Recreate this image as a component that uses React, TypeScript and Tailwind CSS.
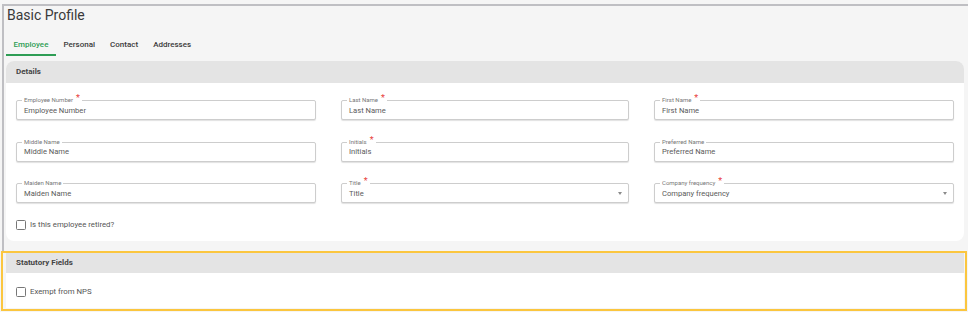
type Field = {
  label: string;
  required?: boolean;
  select?: boolean;
};

const fields: Field[] = [
  { label: 'Employee Number', required: true },
  { label: 'Last Name', required: true },
  { label: 'First Name', required: true },
  { label: 'Middle Name' },
  { label: 'Initials', required: true },
  { label: 'Preferred Name' },
  { label: 'Maiden Name' },
  { label: 'Title', required: true, select: true },
  { label: 'Company frequency', required: true, select: true },
];

const tabs = ['Employee', 'Personal', 'Contact', 'Addresses'];

function FloatingInput({ field }: { field: Field }) {
  return (
    <div className="relative h-[20px] rounded-[2px] border border-[#cdcdcd] bg-white shadow-[0_1px_1px_rgba(0,0,0,0.12)]">
      {/* label sits on the top border */}
      <div className="absolute -top-[5px] left-[5px] flex items-start bg-white px-[2px] text-[6px] leading-[8px] text-[#777]">
        <span>{field.label}</span>
        {field.required && <span className="-mt-[2px] ml-[3px] text-[9px] leading-[9px] text-[#e8413c]">*</span>}
      </div>
      <div className="flex h-full items-center justify-between pl-[7px] pr-[6px] pt-[1px]">
        <span className="text-[7.6px] leading-[10px] text-[#5a5a5a]">{field.label}</span>
        {field.select && <span className="h-0 w-0 border-x-[2.5px] border-t-[3px] border-x-transparent border-t-[#8a8a8a]" />}
      </div>
    </div>
  );
}

function Checkbox({ label }: { label: string }) {
  return (
    <label className="flex h-[10px] items-center gap-[4px]">
      <span className="h-[10px] w-[10px] rounded-[1.5px] border border-[#777] bg-white" />
      <span className="text-[7.8px] leading-[10px] text-[#555]">{label}</span>
    </label>
  );
}

export default function App() {
  return (
    <div className="h-[312px] w-[968px] overflow-hidden bg-[#f5f5f5] font-['Roboto',sans-serif]">
      <div className="pt-[4px]">
        <div className="ml-[2px] border-l-2 border-t-2 border-[#bfbfc3] pb-[10px] pl-[2px] pr-[2px]">
          {/* Page title */}
          <h1 className="pl-[1px] pt-[1px] text-[14px] leading-[16px] text-[#3a3a3a]">Basic Profile</h1>

          {/* Tabs */}
          <div className="mt-[17px] flex">
            {tabs.map((t, i) => (
              <div
                key={t}
                className={`px-[7.5px] pb-[4px] text-[8px] font-medium leading-[10px] ${
                  i === 0 ? 'border-b-2 border-[#2e9d55] text-[#2e9d55]' : 'border-b-2 border-transparent text-[#3a3a3a]'
                }`}
              >
                {t}
              </div>
            ))}
          </div>

          {/* Details card */}
          <div className="mt-[5px] w-[958px] rounded-[8px] bg-white">
            <div className="flex h-[22px] items-center rounded-t-[8px] bg-[#e4e4e4] pl-[10px] text-[8px] font-bold text-[#444]">
              Details
            </div>
            <div className="px-[10px] pb-[11px] pt-[17px]">
              <div className="grid grid-cols-[300px_288px_300px] gap-x-[25px] gap-y-[21.5px]">
                {fields.map((f) => (
                  <FloatingInput key={f.label} field={f} />
                ))}
              </div>
              <div className="mt-[17px]">
                <Checkbox label="Is this employee retired?" />
              </div>
            </div>
          </div>
        </div>
      </div>

      {/* Statutory section, highlighted */}
      <div className="ml-[1px] w-[966px] border-2 border-[#fbc63f] px-[2px] pb-[1px]">
        <div className="ml-[1px] w-[958px] bg-white">
          <div className="flex h-[20px] items-center bg-[#e4e4e4] pl-[10px] text-[8px] font-bold text-[#444]">
            Statutory Fields
          </div>
          <div className="px-[10px] pb-[11px] pt-[14px]">
            <Checkbox label="Exempt from NPS" />
          </div>
        </div>
      </div>
    </div>
  );
}
